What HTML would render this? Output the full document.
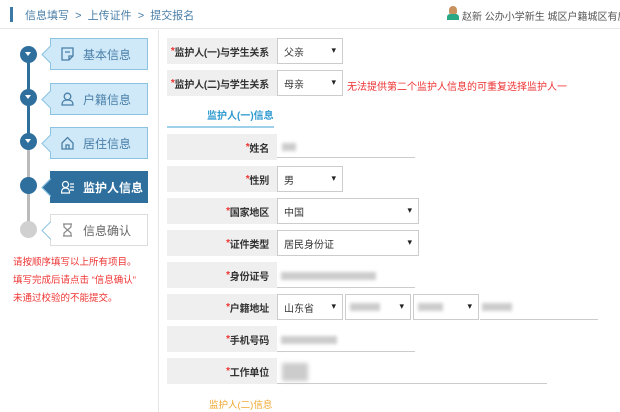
<!DOCTYPE html>
<html><head><meta charset="utf-8"><style>
*{margin:0;padding:0;box-sizing:border-box}
body{width:620px;height:412px;overflow:hidden;background:#fff;font-family:"Liberation Sans","Noto Sans CJK SC",sans-serif;font-size:11px;color:#333;position:relative}
.a{position:absolute}
.hdr{left:0;top:0;width:620px;height:29px;border-bottom:1px solid #e6e6e6}
.crumb{left:25px;top:7px;color:#4a7fa8;font-size:11px}
.lab{background:#efefef;width:110px;height:26px;left:167px;display:flex;align-items:center;justify-content:flex-end;padding-right:8px;font-weight:bold;font-size:10px;color:#333;white-space:nowrap;letter-spacing:-0.2px}
.lab i{color:#e33;font-style:normal}
.sel{height:26px;border:1px solid #ccc;background:#fff;display:flex;align-items:center;padding-left:6px;font-size:10px;color:#333;white-space:nowrap}
.sel:after{content:"▾";position:absolute;right:6px;top:6px;font-size:9px;color:#222}
.ul{height:1px;background:#ccc}
.blur{background:#ccc;height:8px;filter:blur(1.5px)}
.step{left:50px;width:98px;height:32px;border:1px solid #8cc3e3;background:#cfe9f8;display:flex;align-items:center;padding-left:32px;color:#4a7fa8;font-size:12px}
.step:before{content:"";position:absolute;left:-7px;top:9px;width:12px;height:12px;background:inherit;border-left:1px solid #8cc3e3;border-bottom:1px solid #8cc3e3;transform:rotate(45deg)}
.dot{left:20px;width:17px;height:17px;border-radius:50%;background:#2e6f9e}
.dot:after{content:"";position:absolute;left:5px;top:6px;border-left:3.5px solid transparent;border-right:3.5px solid transparent;border-top:4px solid #fff}
.ic{position:absolute;left:10px;top:8px;width:13px;height:14px}
</style></head><body>
<div class="a hdr"></div>
<div class="a" style="left:10px;top:7px;width:3px;height:15px;background:#3a79a8"></div>
<div class="a crumb">信息填写 &nbsp;&gt;&nbsp; 上传证件 &nbsp;&gt;&nbsp; 提交报名</div>
<div class="a" style="left:447px;top:6px;width:12px;height:14px">
<div class="a" style="left:2px;top:0;width:8px;height:8px;border-radius:4px 4px 2px 2px;background:#c8915d"></div>
<div class="a" style="left:0;top:8px;width:12px;height:6px;background:#2aa784;border-radius:3px 3px 0 0"></div></div>
<div class="a" style="left:462px;top:8px;width:158px;overflow:hidden;color:#555;font-size:10px;white-space:nowrap">赵新 公办小学新生 城区户籍城区有房信息</div>
<div class="a" style="left:158px;top:30px;width:1px;height:382px;background:#e6e6e6"></div>

<div class="a" style="left:27px;top:55px;width:3px;height:88px;background:#2e6f9e"></div>
<div class="a" style="left:27px;top:143px;width:3px;height:86px;background:#bbb"></div>
<div class="a dot" style="top:46px"></div>
<div class="a dot" style="top:89px"></div>
<div class="a dot" style="top:133px"></div>
<div class="a" style="left:20px;top:177px;width:17px;height:17px;border-radius:50%;background:#2e6f9e"></div>
<div class="a" style="left:20px;top:221px;width:17px;height:17px;border-radius:50%;background:#d0d0d0"></div>

<div class="a step" style="top:38px"><svg class="ic" viewBox="0 0 13 14"><path d="M1 1h11v8l-4 4H1z M8 13v-4h4 M4 5h5" fill="none" stroke="#4a7fa8" stroke-width="1.3"/></svg>基本信息</div>
<div class="a step" style="top:83px"><svg class="ic" viewBox="0 0 13 14"><circle cx="6.5" cy="4.5" r="3.3" fill="none" stroke="#4a7fa8" stroke-width="1.3"/><path d="M1 13c0-4 2-5 5.5-5s5.5 1 5.5 5z" fill="none" stroke="#4a7fa8" stroke-width="1.3"/></svg>户籍信息</div>
<div class="a step" style="top:127px"><svg class="ic" viewBox="0 0 13 14"><path d="M1 7L6.5 1.5 12 7v6H1z M5 13V9h3v4" fill="none" stroke="#4a7fa8" stroke-width="1.3"/></svg>居住信息</div>
<div class="a step" style="top:171px;background:#2e6f9e;border-color:#2e6f9e;color:#fff;font-weight:bold"><svg class="ic" viewBox="0 0 13 14"><circle cx="4.5" cy="4.5" r="3" fill="none" stroke="#fff" stroke-width="1.2"/><path d="M0.5 13c0-4 1.5-5 4-5s4 1 4 5z M9 4h4M9 7h4M9 10h4" fill="none" stroke="#fff" stroke-width="1.2"/></svg>监护人信息</div>
<div class="a step" style="top:214px;background:#fff;border-color:#ddd;color:#666"><svg class="ic" viewBox="0 0 13 14"><path d="M2 1h9M2 13h9M3 1v3l3.5 3L3 10v3M10 1v3L6.5 7 10 10v3" fill="none" stroke="#888" stroke-width="1.2"/></svg>信息确认</div>

<div class="a" style="left:13px;top:254px;color:#e33;font-size:9.5px;line-height:18px;white-space:nowrap">请按顺序填写以上所有项目。<br>填写完成后请点击 “信息确认”<br>未通过校验的不能提交。</div>

<div class="a lab" style="top:38px"><i>*</i>监护人(一)与学生关系</div>
<div class="a sel" style="left:277px;top:38px;width:66px">父亲</div>
<div class="a lab" style="top:70px"><i>*</i>监护人(二)与学生关系</div>
<div class="a sel" style="left:277px;top:70px;width:66px">母亲</div>
<div class="a" style="left:347px;top:78px;color:#e33;font-size:10px;white-space:nowrap">无法提供第二个监护人信息的可重复选择监护人一</div>

<div class="a" style="left:207px;top:107px;color:#2e9ad0;font-size:10px;font-weight:bold;white-space:nowrap">监护人(一)信息</div>
<div class="a" style="left:167px;top:126px;width:107px;height:2px;background:#9fd0ea"></div>

<div class="a lab" style="top:134px"><i>*</i>姓名</div>
<div class="a blur" style="left:282px;top:143px;width:14px"></div>
<div class="a ul" style="left:277px;top:157px;width:138px"></div>

<div class="a lab" style="top:166px"><i>*</i>性别</div>
<div class="a sel" style="left:277px;top:166px;width:66px">男</div>
<div class="a lab" style="top:198px"><i>*</i>国家地区</div>
<div class="a sel" style="left:277px;top:198px;width:142px">中国</div>
<div class="a lab" style="top:230px"><i>*</i>证件类型</div>
<div class="a sel" style="left:277px;top:230px;width:142px">居民身份证</div>

<div class="a lab" style="top:262px"><i>*</i>身份证号</div>
<div class="a blur" style="left:281px;top:272px;width:95px"></div>
<div class="a ul" style="left:277px;top:287px;width:138px"></div>

<div class="a lab" style="top:294px"><i>*</i>户籍地址</div>
<div class="a sel" style="left:277px;top:294px;width:66px">山东省</div>
<div class="a sel" style="left:345px;top:294px;width:66px"></div>
<div class="a blur" style="left:350px;top:303px;width:30px"></div>
<div class="a sel" style="left:413px;top:294px;width:66px"></div>
<div class="a blur" style="left:418px;top:303px;width:25px"></div>
<div class="a blur" style="left:482px;top:303px;width:30px"></div>
<div class="a ul" style="left:480px;top:319px;width:118px"></div>

<div class="a lab" style="top:326px"><i>*</i>手机号码</div>
<div class="a blur" style="left:281px;top:336px;width:56px"></div>
<div class="a ul" style="left:277px;top:351px;width:138px"></div>

<div class="a lab" style="top:358px"><i>*</i>工作单位</div>
<div class="a" style="left:282px;top:363px;width:26px;height:18px;background:#ccc;filter:blur(2px)"></div>
<div class="a ul" style="left:277px;top:383px;width:270px"></div>

<div class="a" style="left:209px;top:397px;color:#f0a830;font-size:9.5px;white-space:nowrap">监护人(二)信息</div>
</body></html>
